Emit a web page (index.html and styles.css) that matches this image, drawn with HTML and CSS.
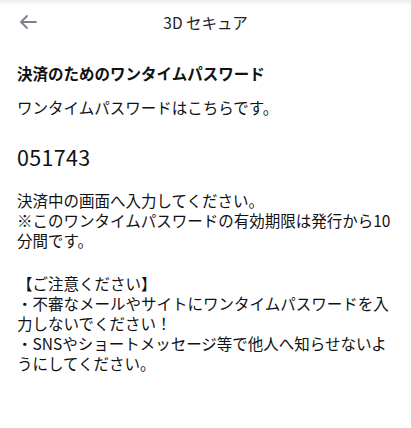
FILE: index.html
```html
<!DOCTYPE html>
<html lang="ja">
<head>
<meta charset="utf-8">
<link rel="stylesheet" href="styles.css">
</head>
<body>
<div class="page">
  <header class="header">
    <span class="back">
      <svg width="20" height="16" viewBox="0 0 20 16" aria-hidden="true">
        <path d="M18 8H3M9 2L3 8l6 6" fill="none" stroke="#7c8089" stroke-width="1.8" stroke-linecap="round" stroke-linejoin="round"/>
      </svg>
    </span>
    <h1 class="header-title">3D セキュア</h1>
  </header>
  <main class="content">
    <h2 class="title">決済のためのワンタイムパスワード</h2>
    <p class="lead">ワンタイムパスワードはこちらです。</p>
    <p class="code">051743</p>
    <p class="para">決済中の画面へ入力してください。<br>※このワンタイムパスワードの有効期限は発行から10分間です。</p>
    <p class="para notice">【ご注意ください】<br>・不審なメールやサイトにワンタイムパスワードを入力しないでください！<br>・SNSやショートメッセージ等で他人へ知らせないようにしてください。</p>
  </main>
</div>
</body>
</html>
```
FILE: styles.css
```css
* { box-sizing: border-box; }
html, body { margin: 0; padding: 0; background: #fff; }
body {
  font-family: "Noto Sans CJK JP", "Noto Sans", sans-serif;
  color: #111;
}
.page { width: 411px; }
.header {
  position: relative;
  height: 44px;
  display: flex;
  align-items: center;
  justify-content: center;
  background: linear-gradient(#ececec 0, #f7f7f7 3px, #fff 6px);
}
.back {
  position: absolute;
  left: 18px;
  top: 14px;
  display: flex;
}
.header-title {
  margin: 0;
  font-size: 15.5px;
  font-weight: 400;
  color: #222;
  line-height: 20px;
}
.content {
  padding: 19px 17px 0 17px;
}
.title {
  margin: 0;
  font-size: 15.5px;
  font-weight: 700;
  line-height: 20px;
}
.lead {
  margin: 14px 0 0;
  font-size: 15.5px;
  line-height: 20px;
}
.code {
  margin: 26px 0 0;
  font-size: 21.5px;
  line-height: 28px;
  letter-spacing: 0.3px;
}
.para {
  margin: 19px 0 0;
  font-size: 15.5px;
  line-height: 20px;
}
.notice { margin-top: 23px; }
```
